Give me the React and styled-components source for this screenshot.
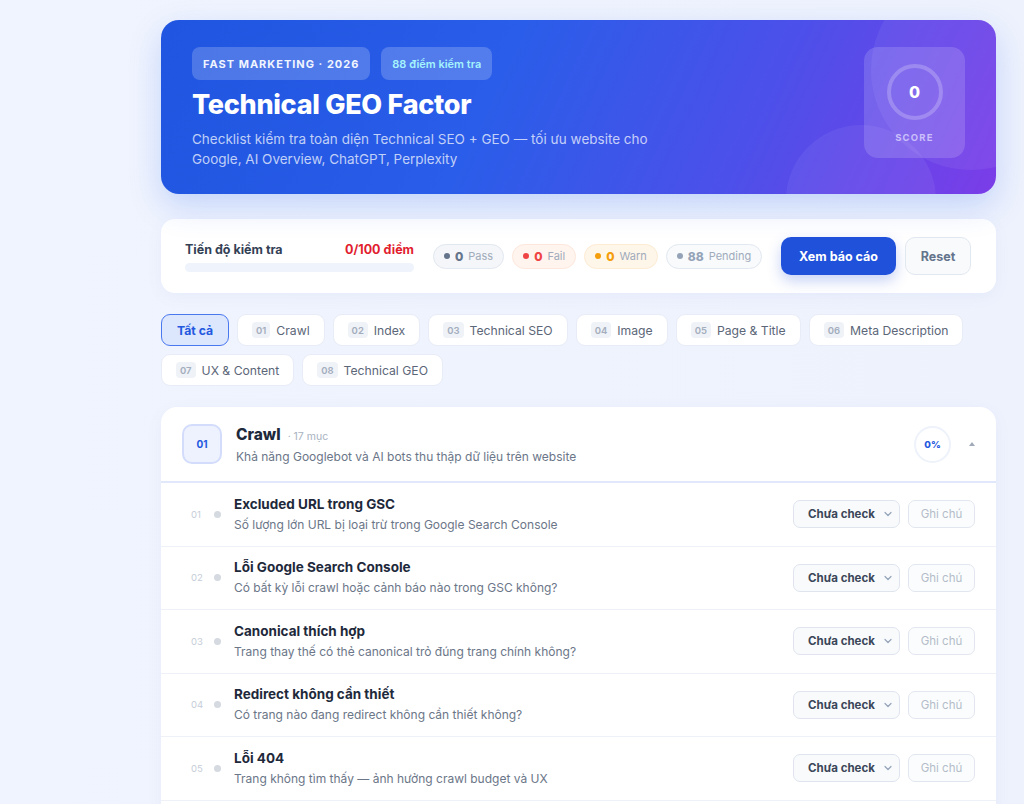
import React from 'react'
import styled, { createGlobalStyle, css } from 'styled-components'

const GlobalStyle = createGlobalStyle`
  * { box-sizing: border-box; }
  body {
    margin: 0;
    font-family: Inter, "Noto Sans", "Liberation Sans", sans-serif;
    background: linear-gradient(90deg, #f0f4fe 0%, #eef2fd 100%);
    color: #1e293b;
  }
`

const tabs = [
  { num: '01', label: 'Crawl' },
  { num: '02', label: 'Index' },
  { num: '03', label: 'Technical SEO' },
  { num: '04', label: 'Image' },
  { num: '05', label: 'Page & Title' },
  { num: '06', label: 'Meta Description' },
  { num: '07', label: 'UX & Content' },
  { num: '08', label: 'Technical GEO' },
]

const items = [
  { title: 'Excluded URL trong GSC', desc: 'Số lượng lớn URL bị loại trừ trong Google Search Console' },
  { title: 'Lỗi Google Search Console', desc: 'Có bất kỳ lỗi crawl hoặc cảnh báo nào trong GSC không?' },
  { title: 'Canonical thích hợp', desc: 'Trang thay thế có thẻ canonical trỏ đúng trang chính không?' },
  { title: 'Redirect không cần thiết', desc: 'Có trang nào đang redirect không cần thiết không?' },
  { title: 'Lỗi 404', desc: 'Trang không tìm thấy — ảnh hưởng crawl budget và UX' },
]

const pills = [
  { kind: 'pass', value: '0', label: 'Pass' },
  { kind: 'fail', value: '0', label: 'Fail' },
  { kind: 'warn', value: '0', label: 'Warn' },
  { kind: 'pending', value: '88', label: 'Pending' },
]

const App = () => (
  <>
    <GlobalStyle />
    <Main>
      <Hero>
        <Blob $size={200} $top={-50} $right={-75} />
        <Blob $size={150} $top={105} $right={60} />
        <HeroText>
          <BadgeRow>
            <Badge>FAST MARKETING · 2026</Badge>
            <Badge $accent>88 điểm kiểm tra</Badge>
          </BadgeRow>
          <Title>Technical GEO Factor</Title>
          <Subtitle>
            Checklist kiểm tra toàn diện Technical SEO + GEO — tối ưu website cho
            <br />
            Google, AI Overview, ChatGPT, Perplexity
          </Subtitle>
        </HeroText>
        <ScoreBox>
          <ScoreRing>0</ScoreRing>
          <ScoreLabel>SCORE</ScoreLabel>
        </ScoreBox>
      </Hero>

      <ProgressCard>
        <ProgressBlock>
          <ProgressHead>
            <ProgressTitle>Tiến độ kiểm tra</ProgressTitle>
            <ProgressValue>0/100 điểm</ProgressValue>
          </ProgressHead>
          <Track />
        </ProgressBlock>
        <Pills>
          {pills.map((p) => (
            <Pill key={p.kind} $kind={p.kind}>
              <Dot $kind={p.kind} />
              <PillValue $kind={p.kind}>{p.value}</PillValue>
              <PillLabel>{p.label}</PillLabel>
            </Pill>
          ))}
        </Pills>
        <Actions>
          <PrimaryButton>Xem báo cáo</PrimaryButton>
          <GhostButton>Reset</GhostButton>
        </Actions>
      </ProgressCard>

      <Tabs>
        <Tab $active>Tất cả</Tab>
        {tabs.map((t) => (
          <Tab key={t.num}>
            <TabNum>{t.num}</TabNum>
            {t.label}
          </Tab>
        ))}
      </Tabs>

      <Section>
        <SectionHead>
          <SectionNum>01</SectionNum>
          <SectionInfo>
            <SectionTitleRow>
              <SectionTitle>Crawl</SectionTitle>
              <SectionCount>· 17 mục</SectionCount>
            </SectionTitleRow>
            <SectionDesc>Khả năng Googlebot và AI bots thu thập dữ liệu trên website</SectionDesc>
          </SectionInfo>
          <Percent>0%</Percent>
          <Caret />
        </SectionHead>
        {items.map((it, i) => (
          <Row key={it.title}>
            <RowNum>{String(i + 1).padStart(2, '0')}</RowNum>
            <RowDot />
            <RowText>
              <RowTitle>{it.title}</RowTitle>
              <RowDesc>{it.desc}</RowDesc>
            </RowText>
            <Select>
              Chưa check
              <svg width="10" height="10" viewBox="0 0 10 10" fill="none">
                <path d="M2 3.5L5 6.5L8 3.5" stroke="#94a3b8" strokeWidth="1.2" strokeLinecap="round" strokeLinejoin="round" />
              </svg>
            </Select>
            <NoteButton>Ghi chú</NoteButton>
          </Row>
        ))}
      </Section>
    </Main>
  </>
)

export default App

const Main = styled.main`
  width: 835px;
  margin-left: 161px;
  padding-top: 20px;
`

const Hero = styled.header`
  position: relative;
  overflow: hidden;
  display: flex;
  justify-content: space-between;
  align-items: flex-start;
  height: 174px;
  padding: 27px 31px;
  border-radius: 18px;
  background: linear-gradient(115deg, #1f55e0 0%, #2a5de9 40%, #4c50ea 70%, #7b3de8 100%);
  box-shadow: 0 12px 32px rgba(37, 99, 235, 0.22);
  color: #fff;
`

const Blob = styled.div`
  position: absolute;
  width: ${(p) => p.$size}px;
  height: ${(p) => p.$size}px;
  top: ${(p) => p.$top}px;
  right: ${(p) => p.$right}px;
  border-radius: 50%;
  background: rgba(255, 255, 255, 0.06);
`

const HeroText = styled.div`
  position: relative;
  display: flex;
  flex-direction: column;
`

const BadgeRow = styled.div`
  display: flex;
  gap: 11px;
`

const Badge = styled.span`
  display: inline-flex;
  align-items: center;
  height: 33px;
  padding: 0 11px;
  border-radius: 8px;
  background: rgba(255, 255, 255, 0.2);
  font-size: 11px;
  font-weight: 700;
  letter-spacing: 1px;
  color: #f1f5ff;
  ${(p) =>
    p.$accent &&
    css`
      letter-spacing: 0;
      font-weight: 600;
      color: #a5f3fc;
    `}
`

const Title = styled.h1`
  margin: 8px 0 0;
  font-size: 27px;
  line-height: 34px;
  font-weight: 800;
  letter-spacing: -0.3px;
`

const Subtitle = styled.p`
  margin: 7px 0 0;
  font-size: 13.5px;
  line-height: 20px;
  color: rgba(255, 255, 255, 0.72);
`

const ScoreBox = styled.div`
  position: relative;
  display: flex;
  flex-direction: column;
  align-items: center;
  width: 101px;
  height: 111px;
  padding-top: 17px;
  border-radius: 14px;
  background: rgba(255, 255, 255, 0.15);
`

const ScoreRing = styled.div`
  display: flex;
  align-items: center;
  justify-content: center;
  width: 56px;
  height: 56px;
  border-radius: 50%;
  border: 4px solid rgba(255, 255, 255, 0.22);
  font-size: 16px;
  font-weight: 800;
`

const ScoreLabel = styled.span`
  margin-top: 12px;
  font-size: 9.5px;
  font-weight: 700;
  letter-spacing: 1.2px;
  color: rgba(225, 220, 255, 0.75);
`

const ProgressCard = styled.section`
  display: flex;
  align-items: center;
  height: 74px;
  margin-top: 25px;
  padding: 0 25px 0 24px;
  border-radius: 14px;
  background: #fff;
  box-shadow: 0 4px 16px rgba(99, 120, 200, 0.06);
`

const ProgressBlock = styled.div`
  width: 229px;
  margin-top: 2px;
`

const ProgressHead = styled.div`
  display: flex;
  justify-content: space-between;
  align-items: baseline;
`

const ProgressTitle = styled.span`
  font-size: 12.5px;
  font-weight: 700;
  color: #334155;
`

const ProgressValue = styled.span`
  font-size: 12.5px;
  font-weight: 700;
  color: #e11d2e;
`

const Track = styled.div`
  height: 9px;
  margin-top: 6px;
  border-radius: 5px;
  background: #eef3fc;
`

const Pills = styled.div`
  display: flex;
  gap: 8px;
  margin-left: 19px;
`

const pillColors = {
  pass: { bg: '#f4f6f9', border: '#e2e8f0', dot: '#64748b', value: '#64748b' },
  fail: { bg: '#fff4ee', border: '#fde7dc', dot: '#ef4444', value: '#ef4444' },
  warn: { bg: '#fff6ea', border: '#fdebd3', dot: '#f59e0b', value: '#f59e0b' },
  pending: { bg: '#f8fafc', border: '#e2e8f0', dot: '#94a3b8', value: '#94a3b8' },
}

const Pill = styled.span`
  display: inline-flex;
  align-items: center;
  gap: 4px;
  height: 25px;
  padding: 0 10px;
  border-radius: 13px;
  background: ${(p) => pillColors[p.$kind].bg};
  border: 1px solid ${(p) => pillColors[p.$kind].border};
`

const Dot = styled.span`
  width: 6px;
  height: 6px;
  border-radius: 50%;
  background: ${(p) => pillColors[p.$kind].dot};
`

const PillValue = styled.span`
  margin-left: 1px;
  font-size: 12px;
  font-weight: 800;
  color: ${(p) => pillColors[p.$kind].value};
`

const PillLabel = styled.span`
  margin-left: 1px;
  font-size: 11px;
  color: #a0abbb;
`

const Actions = styled.div`
  display: flex;
  gap: 9px;
  margin-left: auto;
`

const PrimaryButton = styled.button`
  height: 38px;
  width: 115px;
  border: 0;
  border-radius: 10px;
  background: #1f51db;
  color: #fff;
  font-family: inherit;
  font-size: 12.5px;
  font-weight: 700;
  box-shadow: 0 6px 14px rgba(37, 80, 220, 0.25);
`

const GhostButton = styled.button`
  height: 38px;
  width: 66px;
  border: 1px solid #e2e8f0;
  border-radius: 10px;
  background: #f9fafc;
  color: #64748b;
  font-family: inherit;
  font-size: 12.5px;
  font-weight: 700;
`

const Tabs = styled.nav`
  display: flex;
  flex-wrap: wrap;
  gap: 8px;
  margin-top: 21px;
`

const Tab = styled.button`
  display: inline-flex;
  align-items: center;
  gap: 6px;
  height: 32px;
  padding: 0 14px;
  border-radius: 9px;
  border: 1px solid #e8ecf7;
  background: #fff;
  color: #5b6678;
  font-family: inherit;
  font-size: 12.2px;
  ${(p) =>
    p.$active &&
    css`
      padding: 0 15px;
      border: 1.5px solid #4a78ef;
      background: #dce6fd;
      color: #2358e0;
      font-weight: 700;
    `}
`

const TabNum = styled.span`
  display: inline-flex;
  align-items: center;
  justify-content: center;
  height: 16px;
  padding: 0 4px;
  border-radius: 4px;
  background: #eff2f7;
  color: #a3adbd;
  font-size: 9.5px;
  font-weight: 600;
`

const Section = styled.section`
  margin-top: 21px;
  padding-bottom: 12px;
  border-radius: 16px 16px 0 0;
  background: #fff;
  overflow: hidden;
  box-shadow: 0 4px 16px rgba(99, 120, 200, 0.06);
`

const SectionHead = styled.div`
  display: flex;
  align-items: center;
  height: 76px;
  padding: 0 21px;
  border-bottom: 2px solid #e1e8fb;
`

const SectionNum = styled.div`
  display: flex;
  align-items: center;
  justify-content: center;
  width: 40px;
  height: 40px;
  border-radius: 10px;
  border: 2px solid #d3ddfb;
  background: #edf2fe;
  color: #2358e0;
  font-size: 10px;
  font-weight: 700;
`

const SectionInfo = styled.div`
  flex: 1;
  margin-left: 14px;
`

const SectionTitleRow = styled.div`
  display: flex;
  align-items: baseline;
  gap: 7px;
`

const SectionTitle = styled.span`
  font-size: 15.5px;
  font-weight: 800;
  color: #1e293b;
`

const SectionCount = styled.span`
  font-size: 10.5px;
  color: #a8b2c1;
`

const SectionDesc = styled.div`
  margin-top: 5px;
  font-size: 12px;
  color: #6b7688;
`

const Percent = styled.div`
  display: flex;
  align-items: center;
  justify-content: center;
  width: 37px;
  height: 37px;
  border-radius: 50%;
  border: 2px solid #eef2fa;
  color: #2358e0;
  font-size: 9.5px;
  font-weight: 800;
`

const Caret = styled.span`
  width: 0;
  height: 0;
  margin-left: 18px;
  border-left: 3.5px solid transparent;
  border-right: 3.5px solid transparent;
  border-bottom: 4px solid #a0aab8;
`

const Row = styled.div`
  display: flex;
  align-items: center;
  height: 63.5px;
  padding: 0 21px 0 30px;
  border-bottom: 1px solid #eef1f7;
`

const RowNum = styled.span`
  width: 18px;
  font-size: 9.5px;
  color: #c6cdd8;
`

const RowDot = styled.span`
  width: 7px;
  height: 7px;
  margin-left: 5px;
  border-radius: 50%;
  background: #d5d9e0;
`

const RowText = styled.div`
  flex: 1;
  margin-left: 13px;
  margin-top: -1px;
`

const RowTitle = styled.div`
  font-size: 13.5px;
  font-weight: 700;
  color: #1e293b;
`

const RowDesc = styled.div`
  margin-top: 5px;
  font-size: 12px;
  color: #6b7688;
`

const Select = styled.button`
  display: inline-flex;
  align-items: center;
  justify-content: space-between;
  width: 107px;
  height: 28px;
  padding: 0 6px 0 14px;
  border: 1px solid #dfe4ee;
  border-radius: 7px;
  background: #f8fafc;
  color: #3b4658;
  font-family: inherit;
  font-size: 11.5px;
  font-weight: 700;
`

const NoteButton = styled.button`
  width: 67px;
  height: 28px;
  margin-left: 8px;
  border: 1px solid #e2e7ef;
  border-radius: 7px;
  background: #fbfcfd;
  color: #b3bcc9;
  font-family: inherit;
  font-size: 11.5px;
`
